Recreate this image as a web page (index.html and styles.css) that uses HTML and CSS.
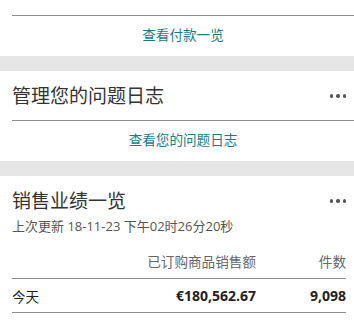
FILE: index.html
```html
<!DOCTYPE html>
<html lang="zh">
<head>
  <meta charset="UTF-8" />
  <meta name="viewport" content="width=device-width, initial-scale=1.0" />
  <title>卖家平台</title>
  <link rel="stylesheet" href="styles.css">
</head>
<body>
  <div class="card card-tail">
    <div class="divider"></div>
    <a class="card-link" href="#">查看付款一览</a>
  </div>

  <div class="band"></div>

  <div class="card">
    <div class="card-head">
      <h2>管理您的问题日志</h2>
      <span class="more"><i></i><i></i><i></i></span>
    </div>
    <div class="divider"></div>
    <a class="card-link" href="#">查看您的问题日志</a>
  </div>

  <div class="band"></div>

  <div class="card">
    <div class="card-head">
      <h2>销售业绩一览</h2>
      <span class="more"><i></i><i></i><i></i></span>
    </div>
    <p class="updated">上次更新 18-11-23 下午02时26分20秒</p>
    <table class="sales">
      <thead>
        <tr><th></th><th>已订购商品销售额</th><th>件数</th></tr>
      </thead>
      <tbody>
        <tr><td>今天</td><td class="num">€180,562.67</td><td class="num">9,098</td></tr>
        <tr><td>昨天</td><td class="num">€204,310.55</td><td class="num">11,420</td></tr>
      </tbody>
    </table>
  </div>
</body>
</html>
```

FILE: styles.css
```css
body {
  margin: 0;
  background: #fff;
  color: #333;
  font-family: "Open Sans", "Noto Sans CJK SC", sans-serif;
  overflow: hidden;
}
.card {
  background: #fff;
  padding-left: 12px;
}
.card-tail {
  padding-top: 15px;
}
.divider {
  height: 1px;
  background: #8c8c8c;
}
.card-link {
  display: block;
  height: 40px;
  line-height: 38px;
  text-align: center;
  font-size: 13.6px;
  color: #1d7a84;
  text-decoration: none;
  margin-left: -12px;
  padding-left: 12px;
}
.band {
  height: 15px;
  background: #e6e6e6;
}
.card-head {
  display: flex;
  align-items: center;
  justify-content: space-between;
  padding: 13px 8px 12px 0;
}
.card-head h2 {
  margin: 0;
  font-size: 19px;
  line-height: 24px;
  font-weight: normal;
  color: #333;
}
.more {
  display: flex;
  gap: 3px;
}
.more i {
  width: 3.5px;
  height: 3.5px;
  border-radius: 50%;
  background: #555;
}
.updated {
  margin: -9px 0 0;
  font-size: 13px;
  line-height: 20px;
  color: #555;
}
.sales {
  width: calc(100% - 8px);
  border-collapse: collapse;
  margin-top: 10px;
  font-size: 13.6px;
}
.sales th {
  font-weight: normal;
  color: #666;
  text-align: right;
  height: 30px;
  padding: 0 0 2px;
  vertical-align: middle;
  border-bottom: 1px solid #8c8c8c;
}
.sales th:last-child {
  width: 90px;
}
.sales td {
  height: 33px;
  padding: 0;
  border-bottom: 1px solid #8c8c8c;
  color: #222;
}
.sales tr + tr td {
  padding-top: 4px;
}
.sales td.num {
  text-align: right;
  font-weight: bold;
  font-size: 14px;
}
```
